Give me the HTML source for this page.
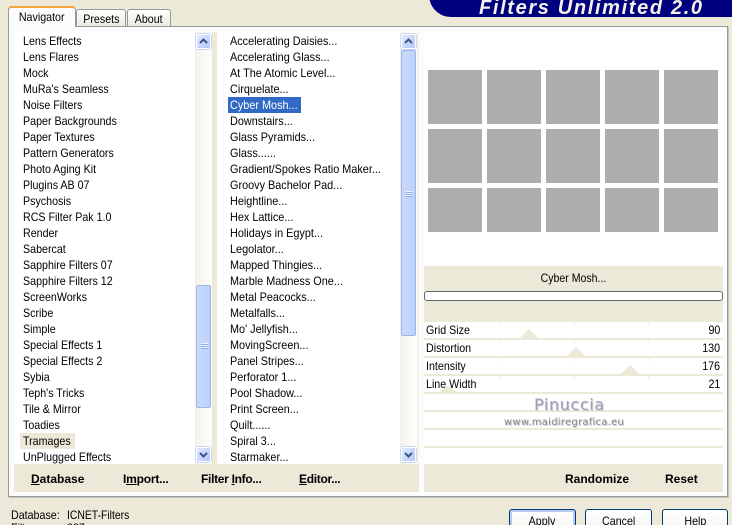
<!DOCTYPE html>
<html>
<head>
<meta charset="utf-8">
<style>
html,body{margin:0;padding:0;width:732px;height:525px;overflow:hidden}
body{background:#ECE9D8;font-family:"Liberation Sans",sans-serif;font-size:12px;color:#000}
div{position:absolute;box-sizing:border-box}
#root{left:0;top:0;width:732px;height:525px;overflow:hidden;background:#ECE9D8}
.t{white-space:nowrap;line-height:16px;height:16px;transform:scaleX(.89);transform-origin:0 0}
.r{transform-origin:100% 0}
.sx{display:inline-block;transform:scaleX(.89)}
.b{font-weight:bold;white-space:nowrap;line-height:16px;font-size:12px}
.list{transform:scaleX(.89);transform-origin:0 0}
.list div{left:0;white-space:nowrap;line-height:16px;height:16px}
.beige{background:#ECE9D8}
.sq{background:#ADADAD;width:54px}
.track{background:linear-gradient(90deg,#F3F1EC,#FEFEFB);width:17px}
.sb{left:1px;width:15px;height:15px;background:linear-gradient(135deg,#E1EAFE,#B2C6F5);border:1px solid #fff;border-radius:2px;box-shadow:0 0 0 1px #C9D6F4}
.thumb{background:linear-gradient(90deg,#C9DAFB,#BDD0F9);border:1px solid #fff;outline:1px solid #9DB5EC;outline-offset:-1px;border-radius:2px;width:15px}
.grip{left:4px;width:7px;height:1px;background:#EEF4FE;box-shadow:0 1px 0 #8CB0F8}
.line{left:424px;width:299px;height:2px;background:#ECE9D8}
.btn{top:509px;height:30px;border:1px solid #003C74;border-radius:3px;background:linear-gradient(#fff,#F2F1EA);text-align:center;line-height:22px;font-size:12px}
</style>
</head>
<body>
<div id="root">
<!-- banner -->
<div style="left:429px;top:-20px;width:320px;height:37px;background:#00007F;border-bottom-left-radius:22px"></div>
<div style="left:479px;top:-3px;color:#F4F2E8;font-weight:bold;font-style:italic;font-size:20px;line-height:22px;letter-spacing:1.65px;white-space:nowrap">Filters Unlimited 2.0</div>

<!-- tabs -->
<div style="left:8px;top:26px;width:720px;height:471px;background:#FCFCFE;border:1px solid #919B9C;box-shadow:1px 1px 0 #C6C4B6"></div>
<div style="left:76px;top:9px;width:50px;height:18px;background:linear-gradient(#fff,#ECEBE4);border:1px solid #919B9C;border-radius:3px 3px 0 0;text-align:center;line-height:18px"><span class="sx">Presets</span></div>
<div style="left:127px;top:9px;width:44px;height:18px;background:linear-gradient(#fff,#ECEBE4);border:1px solid #919B9C;border-radius:3px 3px 0 0;text-align:center;line-height:18px"><span class="sx">About</span></div>
<div style="left:8px;top:6px;width:68px;height:21px;background:#FCFCFE;border:1px solid #919B9C;border-top:2px solid #F2A33A;border-bottom:none;border-radius:4px 4px 0 0;text-align:center;line-height:18px"><span class="sx">Navigator</span></div>

<!-- list 1 -->
<div style="left:14px;top:32px;width:181px;height:432px;background:#fff"></div>
<div style="left:20px;top:433px;width:55px;height:16px;background:#ECE9D8"></div>
<div class="list" style="left:23px;top:33px;width:170px;height:432px">
<div style="top:0">Lens Effects</div>
<div style="top:16px">Lens Flares</div>
<div style="top:32px">Mock</div>
<div style="top:48px">MuRa's Seamless</div>
<div style="top:64px">Noise Filters</div>
<div style="top:80px">Paper Backgrounds</div>
<div style="top:96px">Paper Textures</div>
<div style="top:112px">Pattern Generators</div>
<div style="top:128px">Photo Aging Kit</div>
<div style="top:144px">Plugins AB 07</div>
<div style="top:160px">Psychosis</div>
<div style="top:176px">RCS Filter Pak 1.0</div>
<div style="top:192px">Render</div>
<div style="top:208px">Sabercat</div>
<div style="top:224px">Sapphire Filters 07</div>
<div style="top:240px">Sapphire Filters 12</div>
<div style="top:256px">ScreenWorks</div>
<div style="top:272px">Scribe</div>
<div style="top:288px">Simple</div>
<div style="top:304px">Special Effects 1</div>
<div style="top:320px">Special Effects 2</div>
<div style="top:336px">Sybia</div>
<div style="top:352px">Teph's Tricks</div>
<div style="top:368px">Tile &amp; Mirror</div>
<div style="top:384px">Toadies</div>
<div style="top:400px">Tramages</div>
<div style="top:416px">UnPlugged Effects</div>
</div>
<div class="track" style="left:195px;top:32px;height:432px">
  <div class="sb" style="top:2px"><svg width="13" height="13" style="display:block"><path d="M3 8 L6.500 4.500 L10 8" fill="none" stroke="#3A5488" stroke-width="2"/></svg></div>
  <div class="thumb" style="left:1px;top:253px;height:123px"><div class="grip" style="top:57px"></div><div class="grip" style="top:59px"></div><div class="grip" style="top:61px"></div></div>
  <div class="sb" style="top:415px"><svg width="13" height="13" style="display:block"><path d="M3 5 L6.500 8.500 L10 5" fill="none" stroke="#3A5488" stroke-width="2"/></svg></div>
</div>
<div class="beige" style="left:212px;top:32px;width:5px;height:432px"></div>

<!-- list 2 -->
<div style="left:217px;top:32px;width:183px;height:432px;background:#fff"></div>
<div style="left:228px;top:97px;width:73px;height:16px;background:#316AC5"></div>
<div class="list" style="left:230px;top:33px;width:170px;height:432px;transform:scaleX(.905)">
<div style="top:0">Accelerating Daisies...</div>
<div style="top:16px">Accelerating Glass...</div>
<div style="top:32px">At The Atomic Level...</div>
<div style="top:48px">Cirquelate...</div>
<div style="top:64px;color:#fff">Cyber Mosh...</div>
<div style="top:80px">Downstairs...</div>
<div style="top:96px">Glass Pyramids...</div>
<div style="top:112px">Glass......</div>
<div style="top:128px">Gradient/Spokes Ratio Maker...</div>
<div style="top:144px">Groovy Bachelor Pad...</div>
<div style="top:160px">Heightline...</div>
<div style="top:176px">Hex Lattice...</div>
<div style="top:192px">Holidays in Egypt...</div>
<div style="top:208px">Legolator...</div>
<div style="top:224px">Mapped Thingies...</div>
<div style="top:240px">Marble Madness One...</div>
<div style="top:256px">Metal Peacocks...</div>
<div style="top:272px">Metalfalls...</div>
<div style="top:288px">Mo' Jellyfish...</div>
<div style="top:304px">MovingScreen...</div>
<div style="top:320px">Panel Stripes...</div>
<div style="top:336px">Perforator 1...</div>
<div style="top:352px">Pool Shadow...</div>
<div style="top:368px">Print Screen...</div>
<div style="top:384px">Quilt......</div>
<div style="top:400px">Spiral 3...</div>
<div style="top:416px">Starmaker...</div>
</div>
<div class="track" style="left:400px;top:32px;height:432px">
  <div class="sb" style="top:2px"><svg width="13" height="13" style="display:block"><path d="M3 8 L6.500 4.500 L10 8" fill="none" stroke="#3A5488" stroke-width="2"/></svg></div>
  <div class="thumb" style="left:1px;top:18px;height:286px"><div class="grip" style="top:140px"></div><div class="grip" style="top:142px"></div><div class="grip" style="top:144px"></div></div>
  <div class="sb" style="top:415px"><svg width="13" height="13" style="display:block"><path d="M3 5 L6.500 8.500 L10 5" fill="none" stroke="#3A5488" stroke-width="2"/></svg></div>
</div>
<div style="left:417px;top:32px;width:2px;height:460px;background:#F4F2EA"></div>

<!-- bottom left bar -->
<div class="beige" style="left:14px;top:464px;width:405px;height:28px"></div>
<div class="b" style="left:31px;top:471px"><u>D</u>atabase</div>
<div class="b" style="left:123px;top:471px;letter-spacing:-.2px">I<u>m</u>port...</div>
<div class="b" style="left:201px;top:471px;letter-spacing:-.3px">Filter <u>I</u>nfo...</div>
<div class="b" style="left:299px;top:471px;letter-spacing:-.3px"><u>E</u>ditor...</div>

<!-- preview -->
<div style="left:424px;top:32px;width:299px;height:234px;background:#fff"></div>
<div class="sq" style="left:428px;top:70px;height:54px"></div>
<div class="sq" style="left:487px;top:70px;height:54px"></div>
<div class="sq" style="left:546px;top:70px;height:54px"></div>
<div class="sq" style="left:605px;top:70px;height:54px"></div>
<div class="sq" style="left:664px;top:70px;height:54px"></div>
<div class="sq" style="left:428px;top:129px;height:54px"></div>
<div class="sq" style="left:487px;top:129px;height:54px"></div>
<div class="sq" style="left:546px;top:129px;height:54px"></div>
<div class="sq" style="left:605px;top:129px;height:54px"></div>
<div class="sq" style="left:664px;top:129px;height:54px"></div>
<div class="sq" style="left:428px;top:188px;height:44px"></div>
<div class="sq" style="left:487px;top:188px;height:44px"></div>
<div class="sq" style="left:546px;top:188px;height:44px"></div>
<div class="sq" style="left:605px;top:188px;height:44px"></div>
<div class="sq" style="left:664px;top:188px;height:44px"></div>

<!-- name + progress -->
<div class="beige" style="left:424px;top:266px;width:299px;height:56px"></div>
<div class="t" style="left:424px;top:270px;width:299px;text-align:center;transform:scaleX(.88);transform-origin:50% 0">Cyber Mosh...</div>
<div style="left:424px;top:291px;width:299px;height:10px;background:#fff;border:1px solid #666;border-radius:3px"></div>

<!-- sliders -->
<div style="left:424px;top:322px;width:299px;height:142px;background:#fff"></div>
<div class="line" style="top:338px"></div>
<div class="line" style="top:356px"></div>
<div class="line" style="top:374px"></div>
<div class="line" style="top:392px"></div>
<div class="line" style="top:410px"></div>
<div class="line" style="top:428px"></div>
<div class="line" style="top:446px"></div>
<svg width="732" height="525" style="position:absolute;left:0;top:0">
<g fill="#ECE9D8">
<path d="M520 338 L529 329 L538 338Z"/>
<path d="M567 356 L576 347 L585 356Z"/>
<path d="M621 374 L630 365 L639 374Z"/>
<path d="M439 392 L448 386 L457 392Z"/>
</g>
<g stroke="#F0EFE6" stroke-width="1">
<path d="M500.500 322V325M574.500 322V326M648.500 322V325"/>
<path d="M500.500 340V343M574.500 340V344M648.500 340V343"/>
<path d="M500.500 358V361M574.500 358V362M648.500 358V361"/>
<path d="M500.500 376V379M574.500 376V380M648.500 376V379"/>
</g>
</svg>
<div class="t" style="left:426px;top:322px">Grid Size</div>
<div class="t" style="left:426px;top:340px">Distortion</div>
<div class="t" style="left:426px;top:358px">Intensity</div>
<div class="t" style="left:426px;top:376px">Line Width</div>
<div class="t r" style="right:12px;top:322px">90</div>
<div class="t r" style="right:12px;top:340px">130</div>
<div class="t r" style="right:12px;top:358px">176</div>
<div class="t r" style="right:12px;top:376px">21</div>

<!-- watermark -->
<div style="left:534px;top:394px;font-family:'DejaVu Sans',sans-serif;font-size:16px;line-height:22px;color:#A0A0BE;letter-spacing:.6px;white-space:nowrap;text-shadow:1px 1px 0 #C8C8C8">Pinuccia</div>
<div style="left:504px;top:416px;font-family:'DejaVu Sans',sans-serif;font-size:10px;line-height:14px;color:#85858F;white-space:nowrap;letter-spacing:.25px;text-shadow:1px 1px 0 #D0D0D0">www.maidiregrafica.eu</div>

<!-- bottom right bar -->
<div class="beige" style="left:424px;top:464px;width:299px;height:28px"></div>
<div class="b" style="left:565px;top:471px">Randomize</div>
<div class="b" style="left:665px;top:471px">Reset</div>

<!-- buttons -->
<div class="btn" style="left:509px;width:67px;box-shadow:inset 0 0 0 2px #B5CBEF"><span class="sx">Apply</span></div>
<div class="btn" style="left:585px;width:67px"><span class="sx">Cancel</span></div>
<div class="btn" style="left:662px;width:66px"><span class="sx">Help</span></div>

<!-- status -->
<div class="t" style="left:11px;top:507px">Database:</div>
<div class="t" style="left:67px;top:507px;transform:scaleX(.865)">ICNET-Filters</div>
<div class="t" style="left:11px;top:520px">Filters:</div>
<div class="t" style="left:67px;top:520px">887</div>
</div>
</body>
</html>
